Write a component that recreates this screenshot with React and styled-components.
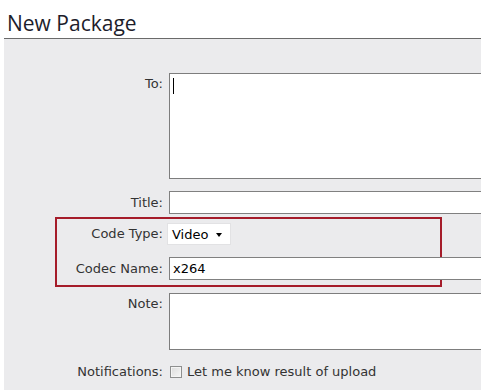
import React from "react";
import styled, { createGlobalStyle } from "styled-components";

const Global = createGlobalStyle`
  html, body { margin: 0; padding: 0; background: #ffffff; overflow: hidden; }
  body { width: 481px; height: 390px; font-family: "DejaVu Sans", Verdana, sans-serif; }
`;

const Page = styled.div`
  width: 481px;
  height: 390px;
  overflow: hidden;
`;

const Title = styled.h1`
  margin: 0 0 0 4px;
  padding: 11px 0 3px 3px;
  height: 24px;
  line-height: 24px;
  font-family: "Open Sans", "DejaVu Sans", sans-serif;
  font-weight: 400;
  font-size: 21px;
  color: #1d1d2b;
  border-bottom: 1px solid #6a6a6a;
  white-space: nowrap;
`;

const Panel = styled.div`
  margin-left: 4px;
  background: #ebebed;
  padding-top: 34px;
  height: 400px;
`;

const Row = styled.div`
  display: grid;
  grid-template-columns: 159px 340px;
  column-gap: 6px;
  align-items: ${(p) => (p.$top ? "start" : "center")};
  margin-bottom: ${(p) => p.$gap || 0}px;
`;

const Label = styled.label`
  text-align: right;
  font-size: 13px;
  line-height: 16px;
  color: #333333;
  padding-top: ${(p) => p.$pad || 0}px;
  white-space: nowrap;
`;

const FieldWrap = styled.div`
  position: relative;
  display: flex;
  align-items: center;
`;

const TextArea = styled.textarea`
  box-sizing: border-box;
  width: 340px;
  height: ${(p) => p.$h}px;
  border: 1px solid #7d7d7d;
  background: #ffffff;
  resize: none;
  outline: none;
  margin: 0;
  padding: 3px;
  font-family: "DejaVu Sans", Verdana, sans-serif;
  font-size: 13px;
`;

const Caret = styled.span`
  position: absolute;
  left: 4px;
  top: 5px;
  width: 1px;
  height: 16px;
  background: #000000;
`;

const Input = styled.input`
  box-sizing: border-box;
  width: 340px;
  height: 23px;
  border: 1px solid #808080;
  background: #ffffff;
  outline: none;
  margin: 0;
  padding: 0 3px;
  font-family: "DejaVu Sans", Verdana, sans-serif;
  font-size: 13px;
  color: #000000;
`;

const Select = styled.div`
  box-sizing: border-box;
  margin-left: -2px;
  width: 64px;
  height: 22px;
  background: #ffffff;
  border: 1px solid #e2e2e4;
  display: flex;
  align-items: center;
  justify-content: space-between;
  padding: 0 8px 0 4px;
  font-size: 13px;
  color: #000000;
`;

const Arrow = styled.span`
  width: 0;
  height: 0;
  border-left: 3.5px solid transparent;
  border-right: 3.5px solid transparent;
  border-top: 4px solid #000000;
  margin-top: 1px;
`;

const Group = styled.div`
  position: relative;
`;

const Highlight = styled.div`
  position: absolute;
  left: 51px;
  top: -6px;
  width: 387px;
  height: 70px;
  box-sizing: border-box;
  border: 2px solid #a51c2a;
  pointer-events: none;
`;

const CheckRow = styled.div`
  display: flex;
  align-items: center;
  gap: 5px;
  margin-left: 1px;
  font-size: 13px;
  line-height: 16px;
  color: #333333;
  white-space: nowrap;
`;

const Box = styled.span`
  box-sizing: border-box;
  width: 12px;
  height: 12px;
  border: 1px solid #8e8f8f;
  background: linear-gradient(135deg, #dcdcdc, #f6f6f6);
  box-shadow: inset 0 0 0 1px #f4f4f4;
`;

export default function App() {
  return (
    <Page>
      <Global />
      <Title>New Package</Title>
      <Panel>
        <Row $top $gap={12}>
          <Label $pad={3}>To:</Label>
          <FieldWrap>
            <TextArea $h={106} />
            <Caret />
          </FieldWrap>
        </Row>
        <Row $gap={9}>
          <Label>Title:</Label>
          <FieldWrap>
            <Input />
          </FieldWrap>
        </Row>
        <Group>
          <Highlight />
          <Row $gap={12}>
            <Label>Code Type:</Label>
            <FieldWrap>
              <Select>
                <span>Video</span>
                <Arrow />
              </Select>
            </FieldWrap>
          </Row>
          <Row $gap={13}>
            <Label>Codec Name:</Label>
            <FieldWrap>
              <Input defaultValue="x264" />
            </FieldWrap>
          </Row>
        </Group>
        <Row $top $gap={14}>
          <Label $pad={3}>Note:</Label>
          <FieldWrap>
            <TextArea $h={57} />
          </FieldWrap>
        </Row>
        <Row>
          <Label>Notifications:</Label>
          <CheckRow>
            <Box />
            <span>Let me know result of upload</span>
          </CheckRow>
        </Row>
      </Panel>
    </Page>
  );
}
